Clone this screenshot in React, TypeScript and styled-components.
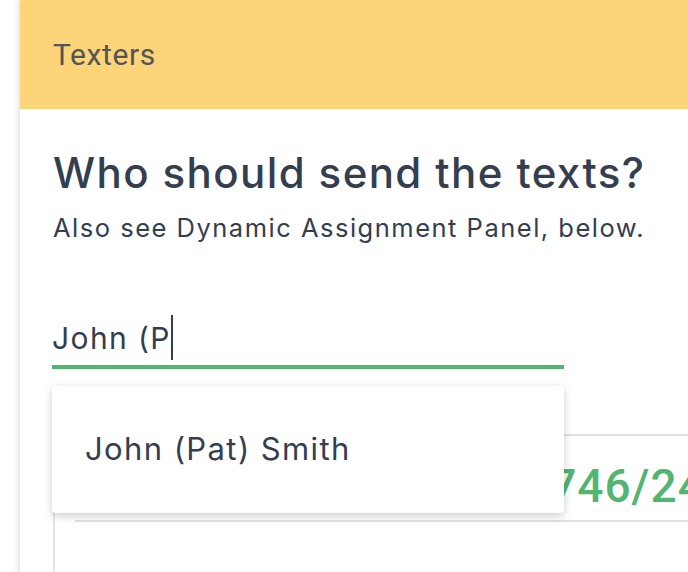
import React from 'react';
import styled, { createGlobalStyle } from 'styled-components';

const GlobalStyle = createGlobalStyle`
  html, body {
    margin: 0;
    padding: 0;
    background: #ffffff;
    overflow: hidden;
  }
  * {
    box-sizing: border-box;
  }
`;

const Page = styled.div`
  width: 688px;
  height: 572px;
  padding-left: 20px;
  overflow: hidden;
  font-family: Inter, 'Noto Sans', sans-serif;
  color: #333e4f;
`;

const Card = styled.div`
  width: 760px;
  min-height: 700px;
  background: #fff;
  box-shadow: 0 0 8px rgba(0, 0, 0, 0.18);
`;

const CardHeader = styled.div`
  height: 109px;
  display: flex;
  align-items: center;
  padding: 0 33px;
  background: #fcd57a;
  font-family: Roboto, 'Liberation Sans', sans-serif;
  font-size: 30px;
  letter-spacing: 0.6px;
  color: #545454;
`;

const CardBody = styled.div`
  padding: 40px 32px 0 33px;
`;

const Title = styled.h2`
  margin: 0;
  font-size: 42px;
  font-weight: 500;
  line-height: 48px;
  letter-spacing: 1.4px;
`;

const Subtitle = styled.p`
  margin: 15px 0 0;
  font-size: 25.5px;
  line-height: 32px;
  letter-spacing: 1.5px;
`;

const Field = styled.div`
  position: relative;
  width: 512px;
  margin-top: 72px;
  margin-left: -1px;
`;

const InputLine = styled.div`
  display: flex;
  align-items: center;
  height: 53px;
  padding-bottom: 6px;
  font-size: 30px;
  letter-spacing: 1.4px;
  border-bottom: 4px solid #52b572;
`;

const Caret = styled.span`
  display: inline-block;
  width: 2px;
  height: 45px;
  background: #333e4f;
`;

const Menu = styled.ul`
  position: absolute;
  top: calc(100% + 17px);
  left: 0;
  right: 0;
  margin: 0;
  padding: 0;
  list-style: none;
  height: 127px;
  background: #fff;
  border-radius: 4px;
  box-shadow: 0 3px 10px rgba(0, 0, 0, 0.2);
  z-index: 2;
`;

const MenuItem = styled.li`
  display: flex;
  align-items: center;
  height: 124px;
  padding: 0 33px;
  font-size: 31px;
  letter-spacing: 1.4px;
  cursor: pointer;
`;

const StatsBox = styled.div`
  margin-top: 65px;
  border-left: 2px solid #e2e2e2;
  border-top: 2px solid #e2e2e2;
  height: 200px;
`;

const StatRow = styled.div`
  display: grid;
  grid-template-columns: 448px auto;
  align-items: baseline;
  margin-left: 20px;
  height: 86px;
  padding-top: 27px;
  border-bottom: 2px solid #e2e2e2;
  white-space: nowrap;
`;

const StatLabel = styled.span`
  font-size: 23px;
  color: #8a8f96;
`;

const StatValue = styled.span`
  font-family: Roboto, 'Liberation Sans', sans-serif;
  font-size: 46px;
  font-weight: 500;
  line-height: 46px;
  letter-spacing: 1px;
  color: #52b572;
`;

export default function App() {
  return (
    <>
      <GlobalStyle />
      <Page>
        <Card>
          <CardHeader>Texters</CardHeader>
          <CardBody>
            <Title>Who should send the texts?</Title>
            <Subtitle>Also see Dynamic Assignment Panel, below.</Subtitle>
            <Field>
              <InputLine>
                <span>John (P</span>
                <Caret />
              </InputLine>
              <Menu>
                <MenuItem>John (Pat) Smith</MenuItem>
              </Menu>
            </Field>
            <StatsBox>
              <StatRow>
                <StatLabel>Texts assigned</StatLabel>
                <StatValue>1746/2400</StatValue>
              </StatRow>
            </StatsBox>
          </CardBody>
        </Card>
      </Page>
    </>
  );
}
